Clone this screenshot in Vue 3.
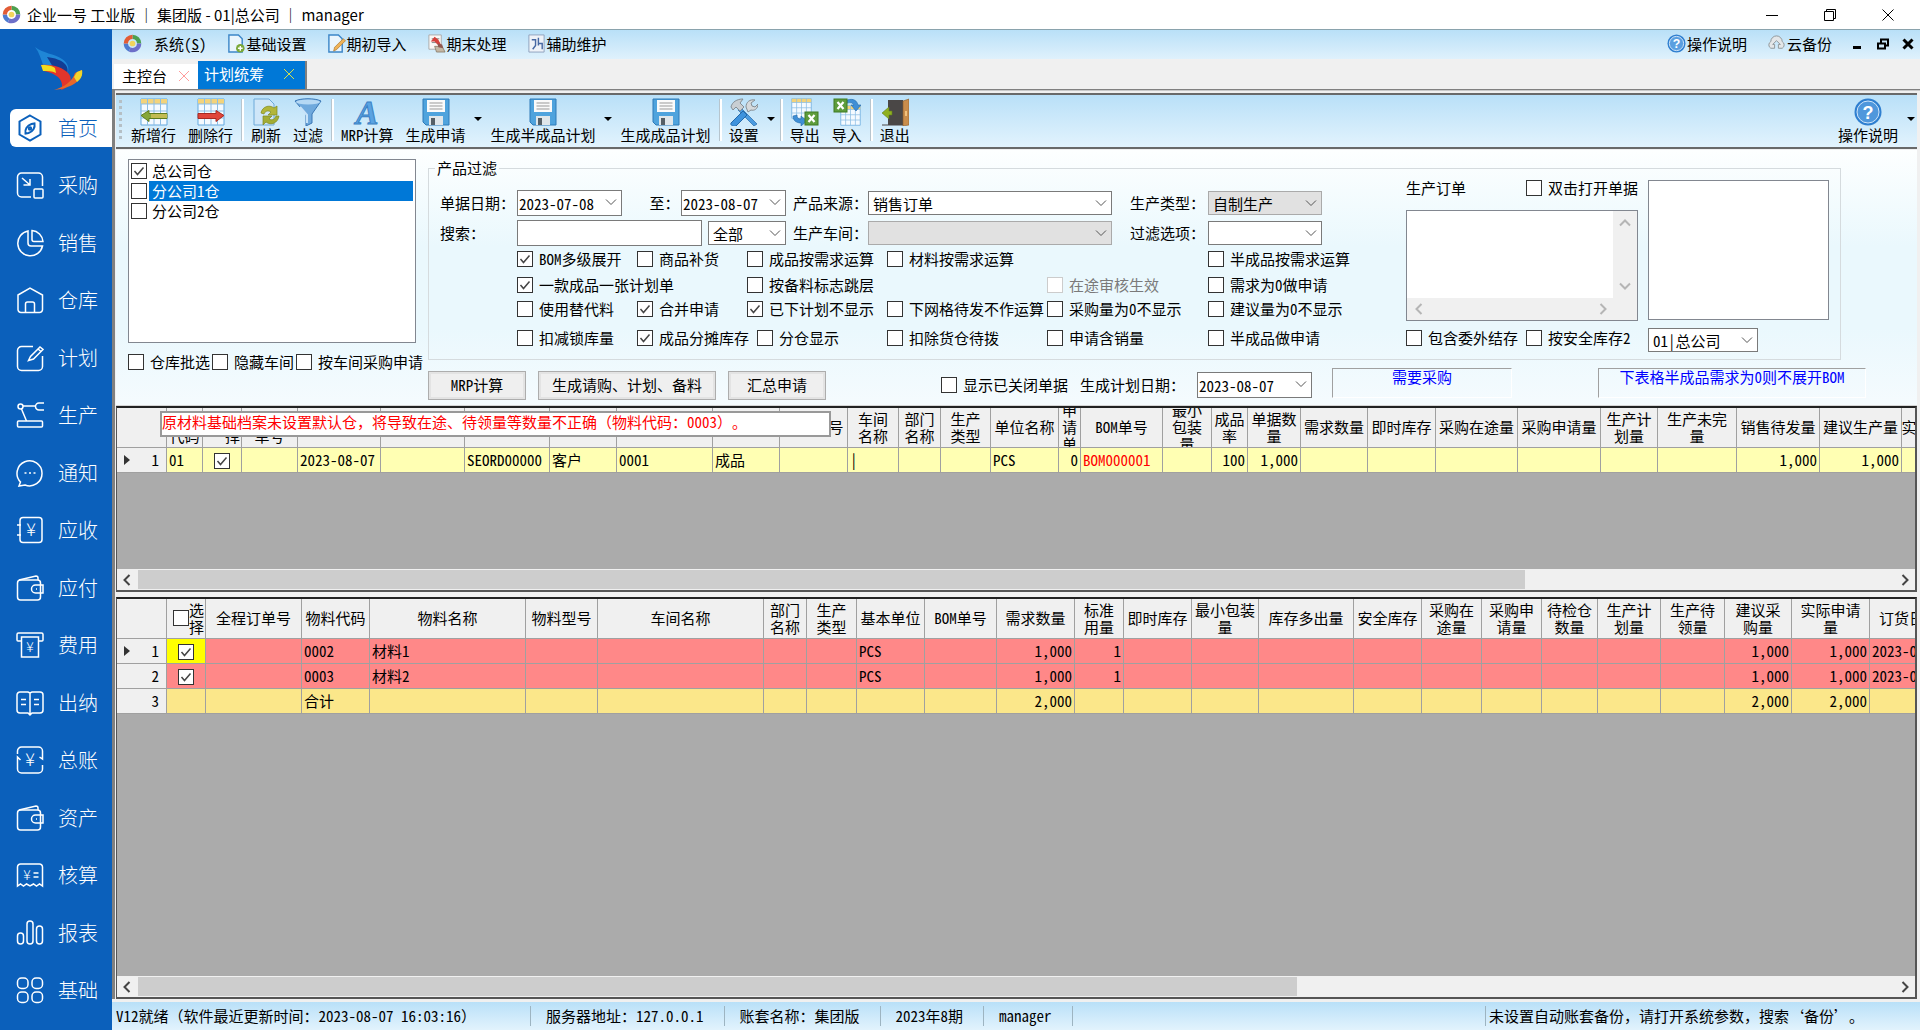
<script setup>
import { ref } from 'vue'

const sideItems = [
  { label: '首页', icon: '<path d="M14 1.500 24.500 7.500v13L14 26.500 3.500 20.500v-13z"/><path d="M18.500 9.500c.8 4-1.500 8-6 9.500l-3 .5c-.8-4 1.500-8 6-9.500z"/><circle cx="14" cy="14.500" r="1.200"/>' },
  { label: '采购', icon: '<path d="M15 26H5.500A4 4 0 0 1 1.500 22V6a4 4 0 0 1 4-4h17a4 4 0 0 1 4 4v9"/><path d="M6 7l8 7M14 8v6H7.500"/><rect x="18" y="18" width="9" height="9" rx="1"/>' },
  { label: '销售', icon: '<path d="M12 2A12.500 12.500 0 1 0 26.500 17H15a3 3 0 0 1-3-3z"/><path d="M16 1.500A12 12 0 0 1 27 12.500H18a2 2 0 0 1-2-2z"/>' },
  { label: '仓库', icon: '<path d="M2 9 14 2l12.500 7v14.500a3 3 0 0 1-3 3H5a3 3 0 0 1-3-3z"/><path d="M9.500 26v-8a2 2 0 0 1 2-2h5a2 2 0 0 1 2 2v8"/>' },
  { label: '计划', icon: '<path d="M17 2.500H5.500a4 4 0 0 0-4 4v16a4 4 0 0 0 4 4h17a4 4 0 0 0 4-4V12"/><path d="M12.500 16.500l2-4L24 3l3 2.500-9.500 9.500z"/><path d="M22 5l3 2.500"/>' },
  { label: '生产', icon: '<circle cx="4.500" cy="5.500" r="2.500"/><path d="M7 5h12M5.500 8l5 12M28 2h-5a3.500 3.500 0 0 0 0 7h5"/><rect x="1.500" y="20" width="25" height="6" rx="1"/>' },
  { label: '通知', icon: '<path d="M4.500 23A12.500 12.500 0 1 1 9 26l-6 1z"/><path d="M8.500 14h2M13 14h2M17.500 14h2"/>' },
  { label: '应收', icon: '<rect x="4" y="1.500" width="22" height="25" rx="3"/><path d="M1 9h4M1 19h4"/>', yen: [15, 20, 18] },
  { label: '应付', icon: '<rect x="1.500" y="6" width="23" height="20" rx="3"/><path d="M3 6l17-4a2 2 0 0 1 2 2v2M27 11h-7.500a4 4 0 0 0 0 8H27zM20 15h1"/>' },
  { label: '费用', icon: '<path d="M5 10H2a1 1 0 0 1-1-1V3.500A1.500 1.500 0 0 1 2.500 2h23A1.500 1.500 0 0 1 27 3.500V9a1 1 0 0 1-1 1h-3"/><path d="M5.500 6h17v20h-17z"/>', yen: [14, 21, 14] },
  { label: '出纳', icon: '<path d="M14 4v22M14 4l-2-1H4a3 3 0 0 0-3 3v15a3 3 0 0 0 3 3h8l2 2 2-2h8a3 3 0 0 0 3-3V6a3 3 0 0 0-3-3h-8z"/><path d="M5 10.500h5M5 15.500h5M18 10.500h5M18 15.500h5"/>' },
  { label: '总账', icon: '<path d="M1.500 8V5a4 4 0 0 1 4-4h17a4 4 0 0 1 4 4v8l-3-2M26.500 19v4a4 4 0 0 1-4 4h-17a4 4 0 0 1-4-4V11l3 3"/>', yen: [14, 20, 18] },
  { label: '资产', icon: '<rect x="1.500" y="6" width="23" height="20" rx="3"/><path d="M3 6l17-4a2 2 0 0 1 2 2v2M27 11h-7.500a4 4 0 0 0 0 8H27zM20 15h1"/>' },
  { label: '核算', icon: '<path d="M1.500 25V6a3 3 0 0 1 3-3h19a3 3 0 0 1 3 3v19l-3-2-3 2-3-2-3.500 2-3.500-2-3 2-3-2z"/><path d="M17.500 12h5M17.500 16h5"/>', yen: [11, 19, 14] },
  { label: '报表', icon: '<rect x="1.500" y="14" width="6" height="11" rx="3"/><rect x="11" y="2" width="6" height="23" rx="3"/><rect x="20.500" y="7" width="6" height="18" rx="3"/>' },
  { label: '基础', icon: '<rect x="1.500" y="2" width="10.500" height="10.500" rx="4"/><rect x="16" y="2" width="10.500" height="10.500" rx="4"/><rect x="1.500" y="16" width="10.500" height="10.500" rx="4"/><rect x="16" y="16" width="10.500" height="10.500" rx="4"/>' }
]

const page = '<path d="M2 1h10l4 4v14H2z" fill="#eaf5fd" stroke="#3c86c8" stroke-width="1.500"/>'
const menus = [
  { label: '基础设置', icon: page + '<circle cx="14" cy="15" r="4.500" fill="#7aa83a"/><path d="M14 12.500v5M11.500 15h5" stroke="#fff" stroke-width="1.500"/>' },
  { label: '期初导入', icon: page + '<path d="M7 18l1-4 9-9 2.500 2-9.500 9.500z" fill="#f0b358" stroke="#a9762d" stroke-width=".7"/>' },
  { label: '期末处理', icon: '<path d="M2 1h13v15H2z" fill="#fbf7f5" stroke="#aaa"/><path d="M5 5h8M5 9h8" stroke="#888"/><path d="M4 8l4-5 4 3 3 6-4-1-3-3z" fill="#d5413c"/><path d="M8 13h8l3 6h-9z" fill="#c4b7a5" stroke="#7a6a55" stroke-width=".7"/><path d="M11 10l5 1 1 4-5-1z" fill="#8e5650"/>' },
  { label: '辅助维护', icon: '<path d="M2 1h16v18H2z" fill="#eef2f8" stroke="#8fa1bd"/><path d="M5 6h4v6l-3 4M12 4v8M12 10h4v6" fill="none" stroke="#4668a3" stroke-width="1.500"/>' }
]

const sheet = '<path d="M1 1h26v26H1z" fill="#f4faff" stroke="#65a9df"/><path d="M1 1h26v5H1z" fill="#f3d37b"/><path d="M1 6h26M1 13h26M1 20h26M7.500 1v26M14 1v26M20.500 1v26" stroke="#8cbde4" fill="none"/>'
const floppy = '<path d="M1 1h26v26H4l-3-3z" fill="#4fa3dd" stroke="#2f7ab8"/><path d="M5 2h18v12H5z" fill="#fafafa"/><path d="M7.500 5h13M7.500 8h13M7.500 11h13" stroke="#999"/><path d="M7 18h14v9H7z" fill="#dfe6ea"/><path d="M9 20h4v7H9z" fill="#555f66"/>'
const excel = (x, y) => `<rect x="${x}" y="${y}" width="13" height="13" fill="#5e9c3c" stroke="#3e7a22"/><path d="M${x + 3.5} ${y + 3}l6 7M${x + 9.5} ${y + 3}l-6 7" stroke="#fff" stroke-width="2.200"/>`
const tools = [
  { label: '新增行', icon: sheet + '<path d="M1 17.500l8-5v3h18v5H9v3z" fill="#86a63a" stroke="#5f7d1f"/><path d="M11 16h16v4H11z" fill="#c2bb52"/>' },
  { label: '删除行', icon: sheet + '<path d="M27 17.500l-8-5v3H1v5h18v3z" fill="#e0453b" stroke="#a92a22"/>', sep: true },
  { label: '刷新', icon: '<path d="M2 1h15l5 5v21H2z" fill="#cfe6f8" stroke="#6ca9d8"/><path d="M9 15c1-6 8-9 13-5l3-2v9h-9l3-3c-3-2-6-1-7 2z" fill="#b2b63a" stroke="#7f8a1e" stroke-width=".7"/><path d="M27 18c-1 7-8 10-13 6l-3 3v-9h9l-3 3c3 2 6 0 7-3z" fill="#a2ad35" stroke="#7f8a1e" stroke-width=".7"/>' },
  { label: '过滤', icon: '<path d="M1 3c6-3 20-3 26 0l-9 13v9l-6 3V16z" fill="#6fa9dd" stroke="#3a77b5"/><ellipse cx="14" cy="4" rx="12" ry="2.500" fill="#b5d8f4"/><path d="M6 9l7 8v8" stroke="#c9e3f8" fill="none" stroke-width="2"/>', sep: true },
  { label: 'MRP计算', icon: '', letter: 'A' },
  { label: '生成申请', icon: floppy, arrow: true },
  { label: '生成半成品计划', icon: floppy, arrow: true },
  { label: '生成成品计划', icon: floppy, sep: true },
  { label: '设置', icon: '<path d="M10 9l17 17-3 2L8 12z" fill="#4c9be0" stroke="#2369aa" stroke-width=".7"/><path d="M1 9c1-5 6-8 12-8l-3 4 4 4-4 4-4-4-3 3z" fill="#c9ced2" stroke="#868e94"/><path d="M16 9c0-5 4-8 9-7l-4 3 1 3 3 1 3-3c0 5-4 7-7 6l-3 2z" fill="#d5d9dc" stroke="#868e94"/><path d="M1 25l12-12 4 4L6 28c-3 1-6-1-5-3z" fill="#3f93dd" stroke="#2369aa"/>', arrow: true, sep: true },
  { label: '导出', icon: '<g transform="scale(.75)">' + sheet + '</g><path d="M2 18c0 5 4 7 8 7v3l6-5-6-5v3c-3 0-4-1-4-4z" fill="#3f8fd6" stroke="#2369aa" stroke-width=".6"/>' + excel(14, 14) },
  { label: '导入', icon: '<g transform="translate(7 7) scale(.75)">' + sheet + '</g><path d="M14 2c7-2 10 1 11 5h3l-5 6-5-6h3c-1-2-3-3-7-2z" fill="#3f8fd6" stroke="#2369aa" stroke-width=".6"/>' + excel(1, 1), sep: true },
  { label: '退出', icon: '<path d="M7 2h15v25H7z" fill="#4a4746"/><path d="M1 27h21" stroke="#4a4746"/><path d="M28 1v26l-6 1V3z" fill="#c98d4c" stroke="#8a5a28" stroke-width=".6"/><path d="M1 15l7-6v4h3v4H8v4z" fill="#8fb01f" stroke="#5f7d1f" stroke-width=".6"/><path d="M24 13h2v5h-2z" fill="#f2c27d"/>' }
]

const warehouses = ref([
  { name: '总公司仓', on: true },
  { name: '分公司1仓', on: false, active: true },
  { name: '分公司2仓', on: false }
])
const stockOpts = ['仓库批选', '隐藏车间', '按车间采购申请']

const checks = ref([
  [1, 1, [['BOM多级展开', true]]], [1, 2, [['商品补货', false]]], [1, 3, [['成品按需求运算', false]]], [1, 4, [['材料按需求运算', false]]], [1, 6, [['半成品按需求运算', false]]],
  [2, 1, [['一款成品一张计划单', true]]], [2, 3, [['按备料标志跳层', false]]], [2, 5, [['在途审核生效', false, true]]], [2, 6, [['需求为0做申请', false]]],
  [3, 1, [['使用替代料', false]]], [3, 2, [['合并申请', true]]], [3, 3, [['已下计划不显示', true]]], [3, 4, [['下网格待发不作运算', false]]], [3, 5, [['采购量为0不显示', false]]], [3, 6, [['建议量为0不显示', false]]],
  [4, 1, [['扣减锁库量', false]]], [4, 2, [['成品分摊库存', true], ['分仓显示', false]]], [4, 4, [['扣除货仓待拨', false]]], [4, 5, [['申请含销量', false]]], [4, 6, [['半成品做申请', false]]]
])

// title, width, cell text, alignment
const orderCols = [
  ['仓库\n代码', 36, '01'], ['选\n择', 39, '', 'check'], ['全程\n单号', 56, ''], ['', 83, '2023-08-07'], ['', 84, ''], ['', 85, 'SEORD00000'],
  ['', 67, '客户'], ['', 96, '0001'], ['', 67, '成品'], ['物料型号', 68, ''], ['车间\n名称', 51, '|'], ['部门\n名称', 42, ''], ['生产\n类型', 50, ''],
  ['单位名称', 68, 'PCS'], ['申\n请\n单', 22, '0', 'num'], ['BOM单号', 82, 'BOM000001', 'red'], ['最小\n包装\n量', 49, ''], ['成品\n率', 36, '100', 'num'],
  ['单据数\n量', 53, '1,000', 'num'], ['需求数量', 67, ''], ['即时库存', 68, ''], ['采购在途量', 82, ''], ['采购申请量', 83, ''], ['生产计\n划量', 57, ''],
  ['生产未完\n量', 79, ''], ['销售待发量', 83, '1,000', 'num'], ['建议生产量', 82, '1,000', 'num'], ['实', 14, '']
]
const partCols = [
  ['选\n择', 39, 'check'], ['全程订单号', 96], ['物料代码', 68], ['物料名称', 156], ['物料型号', 72], ['车间名称', 166], ['部门\n名称', 43], ['生产\n类型', 50],
  ['基本单位', 68], ['BOM单号', 72], ['需求数量', 78, 'num'], ['标准\n用量', 49, 'num'], ['即时库存', 68], ['最小包装\n量', 67], ['库存多出量', 95],
  ['安全库存', 68], ['采购在\n途量', 60], ['采购申\n请量', 60], ['待检仓\n数量', 56], ['生产计\n划量', 63], ['生产待\n领量', 64], ['建议采\n购量', 67, 'num'],
  ['实际申请\n量', 78, 'num'], ['订货日', 46, 'cut']
]
const partRows = [
  { 2: '0002', 3: '材料1', 8: 'PCS', 10: '1,000', 11: '1', 21: '1,000', 22: '1,000', 23: '2023-0' },
  { 2: '0003', 3: '材料2', 8: 'PCS', 10: '1,000', 11: '1', 21: '1,000', 22: '1,000', 23: '2023-0' },
  { 2: '合计', 10: '2,000', 21: '2,000', 22: '2,000' }
]
</script>

<template>
  <div class="app">
    <header class="titlebar">
      <svg class="brand" viewBox="0 0 20 20">
        <g fill="none" stroke-width="4.500">
          <path d="M10 3a7 7 0 0 1 7 7" stroke="#4ba04f" /><path d="M17 10a7 7 0 0 1-10 6.300" stroke="#6d6fc9" />
          <path d="M7 16.300A7 7 0 0 1 3 10" stroke="#4d7bd0" /><path d="M3 10a7 7 0 0 1 7-7" stroke="#e25c35" />
        </g>
        <circle cx="10" cy="10" r="3" fill="#f1d45b" />
      </svg>
      <h1>企业一号 工业版 ｜ 集团版 - 01|总公司 ｜ manager</h1>
      <div class="winctl">
        <button aria-label="最小化"><svg viewBox="0 0 12 12"><path d="M0 6.500h12" /></svg></button>
        <button aria-label="还原"><svg viewBox="0 0 12 12"><path d="M.5 2.500h9v9h-9zM2.500 2.500v-2h9v9h-2" /></svg></button>
        <button aria-label="关闭"><svg viewBox="0 0 12 12"><path d="M.5.5l11 11M11.500.5l-11 11" /></svg></button>
      </div>
    </header>

    <div class="body">
      <aside class="side">
        <svg class="logo" viewBox="0 0 48 44">
          <path d="M0 0c7 6 20 7 27 12 6 4 8 9 5 16-4-6-14-8-24-10C6 12 4 5 0 0z" fill="#1f86d6" />
          <path d="M12 10c8 1 14 3 18 7 3 3 3 7 2 11-4-5-9-7-14-8z" fill="#123d94" />
          <path d="M6 18c10-1 22 2 28 9 4 6 1 13-8 16 2-5 1-9-3-13-4-3-8-5-14-6z" fill="#e2352b" />
          <path d="M6 18c5 0 10 0 14 3l1 5c-4-2-8-2-13-2z" fill="#f3dc1c" />
          <path d="M47 23c1 9-8 18-28 20 10-3 18-8 21-17z" fill="#e8672a" />
          <path d="M47 23c1 5-1 9-5 12l-3-5 3-5z" fill="#f1d52a" />
        </svg>
        <nav>
          <a v-for="(s, i) in sideItems" :key="s.label" href="#" :class="{ on: i === 0 }">
            <span class="pill">
              <svg viewBox="0 0 28 28"><g v-html="s.icon" /><text v-if="s.yen" :x="s.yen[0]" :y="s.yen[1]" :font-size="s.yen[2]" text-anchor="middle">¥</text></svg>
              {{ s.label }}
            </span>
          </a>
        </nav>
      </aside>

      <main>
        <div class="menubar">
          <button class="sys">
            <svg viewBox="0 0 20 20">
              <g fill="none" stroke-width="4.500">
                <path d="M10 3a7 7 0 0 1 7 7" stroke="#4ba04f" /><path d="M17 10a7 7 0 0 1-10 6.300" stroke="#6d6fc9" />
                <path d="M7 16.300A7 7 0 0 1 3 10" stroke="#4d7bd0" /><path d="M3 10a7 7 0 0 1 7-7" stroke="#e25c35" />
              </g>
              <circle cx="10" cy="10" r="3" fill="#f1d45b" />
            </svg>
            <span>系统(<u>S</u>)</span>
          </button>
          <button v-for="m in menus" :key="m.label"><svg viewBox="0 0 20 20" v-html="m.icon" />{{ m.label }}</button>
          <span class="grow" />
          <button>
            <svg viewBox="0 0 20 20"><circle cx="10" cy="10" r="9.500" fill="#2f7fd0" /><circle cx="10" cy="10" r="7.500" fill="#5a9fe0" stroke="#d5e8fa" /><text x="10" y="14.500" class="q">?</text></svg>操作说明
          </button>
          <button>
            <svg viewBox="0 0 20 20"><path d="M4 15a4 4 0 0 1 0-7 6 6 0 0 1 12 0 4 4 0 0 1 0 7h-4v-4h2l-4-4-4 4h2v4z" fill="#e3e6e8" stroke="#8e9598" /></svg>云备份
          </button>
          <div class="mdi">
            <button aria-label="最小化"><svg viewBox="0 0 12 12"><path d="M1 9.500h8" stroke-width="3" /></svg></button>
            <button aria-label="还原"><svg viewBox="0 0 12 12"><path d="M1 5.500h7v5H1zM4 5V1.500h7v6H8" stroke-width="2" /></svg></button>
            <button aria-label="关闭"><svg viewBox="0 0 12 12"><path d="M1.500 1.500l9 9M10.500 1.500l-9 9" stroke-width="3" /></svg></button>
          </div>
        </div>

        <div class="tabs">
          <button class="tab">主控台<svg viewBox="0 0 12 12"><path d="M1 1l10 10M11 1L1 11" stroke="#ff9c9c" /></svg></button>
          <button class="tab active">计划统筹<svg viewBox="0 0 12 12"><path d="M1 1l10 10M11 1L1 11" stroke="#d6e04a" /></svg></button>
        </div>

        <div class="work">
          <div class="toolbar">
            <i class="grip" />
            <template v-for="t in tools" :key="t.label">
              <button class="tool">
                <svg v-if="t.letter" viewBox="0 0 28 28"><text x="14" y="26" class="big">{{ t.letter }}</text></svg>
                <svg v-else viewBox="0 0 28 28" v-html="t.icon" />
                {{ t.label }}
              </button>
              <button v-if="t.arrow" class="drop" aria-label="更多" />
              <i v-if="t.sep" class="sep" />
            </template>
            <span class="grow" />
            <button class="tool">
              <svg viewBox="0 0 28 28"><circle cx="14" cy="14" r="13.500" fill="#2f7fd0" /><circle cx="14" cy="14" r="11" fill="#4f97dc" stroke="#cfe5fa" /><text x="14" y="20.500" class="q lg">?</text></svg>
              操作说明
            </button>
            <button class="drop" aria-label="更多" />
          </div>

          <section class="filter">
            <div class="stock">
              <div class="list">
                <label v-for="w in warehouses" :key="w.name" :class="{ hit: w.active }"><input v-model="w.on" type="checkbox"><span>{{ w.name }}</span></label>
              </div>
              <div class="stockopts">
                <label v-for="o in stockOpts" :key="o" class="ck"><input type="checkbox">{{ o }}</label>
              </div>
            </div>

            <div class="right">
              <fieldset>
                <legend>产品过滤</legend>
                <div class="fs">
                  <div class="fields">
                    <div class="form">
                      <label for="d1">单据日期：</label>
                      <div class="cell dates">
                        <span class="combo date"><input id="d1" value="2023-07-08"><svg viewBox="0 0 12 12"><path d="M1 3.500l5 5 5-5" /></svg></span>
                        <label for="d2">至：</label>
                        <span class="combo date"><input id="d2" value="2023-08-07"><svg viewBox="0 0 12 12"><path d="M1 3.500l5 5 5-5" /></svg></span>
                      </div>
                      <label for="src">产品来源：</label>
                      <span class="combo wide"><select id="src"><option>销售订单</option></select><svg viewBox="0 0 12 12"><path d="M1 3.500l5 5 5-5" /></svg></span>
                      <label for="typ">生产类型：</label>
                      <span class="combo off"><select id="typ"><option>自制生产</option></select><svg viewBox="0 0 12 12"><path d="M1 3.500l5 5 5-5" /></svg></span>

                      <label for="kw">搜索：</label>
                      <div class="cell search">
                        <input id="kw" class="kw">
                        <span class="combo"><select aria-label="范围"><option>全部</option></select><svg viewBox="0 0 12 12"><path d="M1 3.500l5 5 5-5" /></svg></span>
                      </div>
                      <label for="shop">生产车间：</label>
                      <span class="combo wide off"><select id="shop"><option /></select><svg viewBox="0 0 12 12"><path d="M1 3.500l5 5 5-5" /></svg></span>
                      <label for="opt">过滤选项：</label>
                      <span class="combo"><select id="opt"><option /></select><svg viewBox="0 0 12 12"><path d="M1 3.500l5 5 5-5" /></svg></span>
                    </div>
                    <div class="checks">
                      <div v-for="c in checks" :key="c[0] + '-' + c[1]" class="cg" :style="{ gridRow: c[0], gridColumn: c[1] }">
                        <label v-for="k in c[2]" :key="k[0]" class="ck" :class="{ dim: k[2] }"><input v-model="k[1]" type="checkbox" :disabled="k[2]">{{ k[0] }}</label>
                      </div>
                    </div>
                  </div>
                  <div class="orders">
                    <div class="orow"><label for="po">生产订单</label><label class="ck"><input type="checkbox">双击打开单据</label></div>
                    <div class="memo">
                      <textarea id="po" />
                      <div class="vs"><svg viewBox="0 0 12 12"><path d="M1 8.500l5-5 5 5" /></svg><svg viewBox="0 0 12 12"><path d="M1 3.500l5 5 5-5" /></svg></div>
                      <div class="hs"><svg viewBox="0 0 12 12"><path d="M8.500 1l-5 5 5 5" /></svg><svg viewBox="0 0 12 12"><path d="M3.500 1l5 5-5 5" /></svg></div>
                    </div>
                    <div class="orow low"><label class="ck"><input type="checkbox">包含委外结存</label><label class="ck"><input type="checkbox">按安全库存2</label></div>
                  </div>
                  <div class="pick">
                    <div class="box" />
                    <span class="combo"><select aria-label="公司"><option>01|总公司</option></select><svg viewBox="0 0 12 12"><path d="M1 3.500l5 5 5-5" /></svg></span>
                  </div>
                </div>
              </fieldset>

              <div class="actions">
                <button class="btn">MRP计算</button>
                <button class="btn long">生成请购、计划、备料</button>
                <button class="btn">汇总申请</button>
                <label class="ck closed"><input type="checkbox">显示已关闭单据</label>
                <label for="pd">生成计划日期：</label>
                <span class="combo date plan"><input id="pd" value="2023-08-07"><svg viewBox="0 0 12 12"><path d="M1 3.500l5 5 5-5" /></svg></span>
                <div class="note">需要采购</div>
                <div class="note second">下表格半成品需求为0则不展开BOM</div>
              </div>
            </div>
          </section>

          <section class="grid top">
            <p class="tip">原材料基础档案未设置默认仓，将导致在途、待领量等数量不正确（物料代码：0003）。</p>
            <div class="scroll">
              <table>
                <colgroup><col class="idx"><col v-for="(c, i) in orderCols" :key="i" :style="{ width: c[1] + 'px' }"></colgroup>
                <thead>
                  <tr>
                    <th />
                    <th v-for="(c, i) in orderCols" :key="i"><div class="h" :class="{ end: c[3] === 'check' }">{{ c[0] }}</div></th>
                  </tr>
                </thead>
                <tbody>
                  <tr class="cream">
                    <th><i class="cur" />1</th>
                    <td v-for="(c, i) in orderCols" :key="i" :class="c[3]"><input v-if="c[3] === 'check'" type="checkbox" checked aria-label="选择"><template v-else>{{ c[2] }}</template></td>
                  </tr>
                </tbody>
              </table>
            </div>
            <div class="bar"><svg viewBox="0 0 12 12"><path d="M8.500 1l-5 5 5 5" /></svg><div class="track"><i style="width: 79%" /></div><svg viewBox="0 0 12 12"><path d="M3.500 1l5 5-5 5" /></svg></div>
          </section>

          <section class="grid bottom">
            <div class="scroll">
              <table>
                <colgroup><col class="idx"><col v-for="(c, i) in partCols" :key="i" :style="{ width: c[1] + 'px' }"></colgroup>
                <thead>
                  <tr>
                    <th />
                    <th v-for="(c, i) in partCols" :key="i"><div class="h" :class="{ end: c[2] === 'check', cut: c[2] === 'cut' }"><input v-if="c[2] === 'check'" type="checkbox" aria-label="全选">{{ c[0] }}</div></th>
                  </tr>
                </thead>
                <tbody>
                  <tr v-for="(r, n) in partRows" :key="n" :class="n < 2 ? 'rose' : 'sum'">
                    <th><i v-if="n === 0" class="cur" />{{ n + 1 }}</th>
                    <td v-for="(c, i) in partCols" :key="i" :class="[c[2], { lit: n === 0 && i === 0 }]"><input v-if="i === 0 && n < 2" type="checkbox" checked aria-label="选择"><template v-else>{{ r[i] }}</template></td>
                  </tr>
                </tbody>
              </table>
            </div>
            <div class="bar"><svg viewBox="0 0 12 12"><path d="M8.500 1l-5 5 5 5" /></svg><div class="track"><i style="width: 66%" /></div><svg viewBox="0 0 12 12"><path d="M3.500 1l5 5-5 5" /></svg></div>
          </section>
        </div>

        <footer>
          <span class="first">V12就绪（软件最近更新时间：2023-08-07 16:03:16）</span>
          <span>服务器地址：127.0.0.1</span>
          <span>账套名称：集团版</span>
          <span>2023年8期</span>
          <span>manager</span>
          <span class="last">未设置自动账套备份，请打开系统参数，搜索‘备份’。</span>
        </footer>
      </main>
    </div>
  </div>
</template>

<style>
body { margin: 0; background: #f0f0f0; }
</style>

<style scoped>
.app, .app button, .app input, .app select, .app textarea {
  font-family: "Noto Sans Mono CJK SC", "Noto Sans CJK SC", "Liberation Sans", sans-serif;
  font-size: 15px;
  color: #000;
  text-spacing-trim: space-all;
}
.app { min-height: 100vh; display: flex; flex-direction: column; line-height: 18px; white-space: nowrap; overflow: hidden; }
.app * { box-sizing: border-box; }
button { border: 0; background: none; padding: 0; white-space: nowrap; line-height: 18px; }
.grow { flex: 1; }

.titlebar { height: 29px; flex: none; background: #fff; display: flex; align-items: center; padding: 0 3px 0 2px; }
.titlebar h1 { margin: 0 0 0 6px; font: 400 15px/20px "Noto Sans CJK SC", sans-serif; flex: 1; }
.brand { width: 19px; height: 19px; }
.winctl { display: flex; }
.winctl button { width: 58px; height: 28px; display: flex; align-items: center; justify-content: center; }
.winctl svg { width: 12px; height: 12px; fill: none; stroke: #000; }

.body { flex: 1; display: flex; min-height: 0; }
.side { width: 112px; flex: none; background: #0b60bb; display: flex; flex-direction: column; padding-bottom: 11px; }
.logo { width: 48px; height: 44px; margin: 18px 0 8px 35px; flex: none; }
nav { flex: 1; display: flex; flex-direction: column; }
nav a { flex: 1; display: flex; align-items: center; text-decoration: none; color: #fff; padding-left: 10px; }
.pill { flex: 1; height: 38px; display: flex; align-items: center; gap: 14px; padding-left: 6px; border-radius: 6px 0 0 6px; font: 300 20px/28px "Noto Sans CJK SC", sans-serif; }
.pill svg { width: 28px; height: 28px; fill: none; stroke: #fff; stroke-width: 1.5; }
.pill text { stroke: none; fill: #fff; }
.on .pill { background: #fff; color: #0b60bb; }
.on svg { stroke: #0b60bb; stroke-width: 2; }

main { flex: 1; min-width: 0; display: flex; flex-direction: column; }
.menubar { height: 30px; flex: none; display: flex; align-items: center; gap: 20px; padding: 0 6px 2px 11px; border-top: 1px solid #8aa3ad; background: linear-gradient(#b9e0f8, #dff1fc); }
.menubar button { display: flex; align-items: center; gap: 1px; }
.menubar svg { width: 19px; height: 19px; }
.menubar .sys { gap: 12px; }
.mdi { display: flex; gap: 13px; }
.mdi svg { width: 12px; height: 12px; fill: none; stroke: #000; }
.q { fill: #fff; font: 700 13px "Liberation Sans", sans-serif; text-anchor: middle; }
.q.lg { font-size: 18px; }

.tabs { height: 30px; flex: none; display: flex; align-items: flex-end; background: #f0f0f0; padding-left: 2px; }
.tab { height: 25px; background: #fff; display: flex; align-items: center; gap: 11px; padding: 0 8px 2px; }
.tab.active { height: 28px; background: #0078d7; color: #fff; gap: 19px; padding: 0 10px 2px 6px; border-right: 2px solid #808080; }
.tab svg { width: 12px; height: 12px; fill: none; }

.work { flex: 1; display: flex; flex-direction: column; border: solid #808080; border-width: 1px 0 0 3px; box-shadow: inset 0 1px #c8c8c8; padding: 3px 3px 0 1px; background: #f0f0f0; min-height: 0; }
.toolbar { height: 56px; flex: none; display: flex; align-items: stretch; border: solid #696969; border-width: 2px 0; background: linear-gradient(#b9e0f8, #e2f3fd); }
.grip { width: 3px; margin: 5px 3px 8px 3px; border-left: 3px dotted #b5bfc5; }
.tool { padding: 3px 6px 0; display: flex; flex-direction: column; align-items: center; }
.tool svg { width: 28px; height: 28px; }
.big { font: italic 700 34px "Liberation Serif", serif; fill: #5aa3e2; stroke: #3a80c4; text-anchor: middle; }
.drop { width: 13px; display: flex; align-items: center; justify-content: center; }
.drop::before { content: ""; border: 4px solid transparent; border-top-color: #000; border-bottom: 0; margin-bottom: 4px; }
.sep { width: 6px; margin: 4px 0 6px; background: linear-gradient(90deg, transparent 2px, #b7c5ce 2px, #b7c5ce 3px, #fff 3px, #fff 5px, transparent 5px); }

input[type="checkbox"] { appearance: none; width: 16px; height: 16px; margin: 0; flex: none; background: #fff; border: 1px solid #333; display: inline-block; }
input[type="checkbox"]:checked { background: #fff url("data:image/svg+xml,%3Csvg xmlns='http://www.w3.org/2000/svg' viewBox='0 0 14 14'%3E%3Cpath d='M2.500 7l3 3.500 6-7' fill='none' stroke='%23444' stroke-width='1.500'/%3E%3C/svg%3E") center / 14px 14px; }
.ck { display: inline-flex; align-items: center; gap: 6px; }
.dim { color: #7a7a7a; }
.dim input[type="checkbox"] { border-color: #ccc; }

.filter { flex: none; display: flex; margin-top: 1px; height: 256px; padding: 9px 0 0 12px; background: linear-gradient(#fdffff, #eaf8fd 38%, #eaf8fd 70%, #f5fbfe); border-bottom: 1px solid #d5d5d5; }
.stock { width: 300px; flex: none; }
.list { width: 288px; height: 184px; border: 1px solid #828790; background: #fff; padding: 1px 2px; }
.list label { height: 20px; display: flex; align-items: center; }
.list input { margin-right: 2px; }
.list span { flex: 1; height: 20px; line-height: 20px; padding-left: 3px; }
.hit span { background: #0078d7; color: #fff; }
.stockopts { display: flex; gap: 2px; padding-top: 10px; }

.right { flex: 1; min-width: 0; padding-right: 76px; }
fieldset { margin: 0; padding: 0 0 3px; border: 1px solid #d5dbde; min-width: 0; }
legend { margin-left: 6px; padding: 0 2px; }
.fs { display: flex; padding-left: 11px; }
.fields { width: 966px; flex: none; padding-top: 13px; }
.form { display: grid; grid-template-columns: 77px 276px 75px 262px 78px 114px; grid-auto-rows: 26px; row-gap: 4px; align-items: center; }
.cell { display: flex; align-items: center; width: 269px; }
.dates { justify-content: space-between; }
.dates label { margin-left: 26px; }
.search { gap: 6px; }
.kw { width: 185px; height: 26px; border: 1px solid #7a7a7a; }
.combo { position: relative; display: block; height: 24px; }
.combo select, .combo input { appearance: none; width: 100%; height: 100%; border: 1px solid #7a7a7a; border-radius: 0; background: #fff; padding: 0 4px; display: block; }
.combo svg { position: absolute; right: 5px; top: 6px; width: 12px; height: 12px; fill: none; stroke: #555; }
.combo.off select { background: #e1e1e1; border-color: #aaa; }
.combo.wide { width: 244px; }
.combo.date { width: 105px; height: 26px; }
.combo.date input { padding: 0 1px; }
.search .combo { flex: 1; }
.checks { display: grid; margin-left: 77px; grid-template-columns: 120px 110px 140px 160px 161px 160px; grid-template-rows: 26px 26px 22px 36px; align-items: center; }
.cg { display: flex; gap: 8px; width: 0; }

.orders { width: 232px; flex: none; }
.orow { display: flex; justify-content: space-between; padding-top: 2px; align-items: center; }
.orow.low { padding-top: 8px; justify-content: flex-start; gap: 8px; }
.memo { margin-top: 13px; height: 111px; border: 1px solid #828790; background: #fff; display: grid; grid-template: 1fr 22px / 1fr 24px; }
.memo textarea { border: 0; resize: none; padding: 0; min-width: 0; min-height: 0; width: 100%; height: 100%; display: block; }
.memo svg { width: 12px; height: 12px; fill: none; stroke: #b5b5b5; stroke-width: 2; }
.vs { background: #f0f0f0; display: flex; flex-direction: column; align-items: center; justify-content: space-between; padding: 6px 0; }
.hs { grid-column: 1 / 3; background: #f0f0f0; display: flex; align-items: center; justify-content: space-between; padding: 0 28px 0 6px; }
.pick { margin-left: 10px; padding-top: 3px; width: 181px; }
.box { height: 140px; border: 1px solid #828790; background: #fff; }
.pick .combo { width: 110px; margin-top: 8px; }

.actions { display: flex; gap: 12px; align-items: center; padding-top: 8px; height: 42px; }
.actions > * { flex: none; }
.btn { width: 98px; height: 29px; background: #efefef; border: 1px solid #adadad; box-shadow: inset 0 0 0 2px #e3e3e3; }
.btn.long { width: 178px; }
.closed { margin-left: 103px; }
.combo.plan { width: 115px; }
.note { width: 180px; height: 30px; margin-left: 8px; align-self: flex-start; border: 1px solid; border-color: #a0a0a0 #fff #fff #a0a0a0; color: #00f; text-align: center; line-height: 16px; }
.note.second { width: 268px; margin-left: 74px; }

.grid { border: 2px solid #555; border-left-width: 1px; border-top-color: #222; background: #ababab; position: relative; display: flex; flex-direction: column; min-height: 0; }
.top { height: 186px; flex: none; }
.bottom { flex: 1; margin-top: 5px; }
.scroll { flex: 1; overflow: hidden; min-height: 0; }
table { width: 100%; table-layout: fixed; border-collapse: separate; border-spacing: 0; }
.idx { width: 50px; }
th, td { padding: 0; font-weight: 400; border-right: 1px solid #a0a0a0; border-bottom: 1px solid #a0a0a0; overflow: hidden; }
th:last-child, td:last-child { border-right: 0; }
th { background: #f0f0f0; }
.h { height: 39px; display: flex; align-items: center; justify-content: center; white-space: pre; line-height: 17px; overflow: hidden; padding-bottom: 2px; }
.h.end { justify-content: flex-end; padding-right: 1px; }
.h.cut { justify-content: flex-start; padding-left: 9px; }
td, tbody th { height: 25px; line-height: 18px; }
td { padding: 0 2px; text-align: left; }
tbody th { text-align: right; padding-right: 7px; }
.num { text-align: right; }
.red { color: #f00; }
.check { text-align: center; }
.check input { vertical-align: middle; }
.cream td { background: #ffffb3; }
.rose td { background: #f88; }
.rose td.lit { background: #ff0; }
.sum td { background: #fbe78a; }
.cur { float: left; margin: 4px 0 0 7px; border: 5px solid transparent; border-left: 6px solid #333; border-right: 0; }
.tip { position: absolute; z-index: 1; left: 43px; top: 3px; width: 671px; height: 26px; margin: 0; background: #fff; border: 2px solid #999; color: #f00; line-height: 18px; }
.bar { height: 21px; flex: none; background: #f0f0f0; display: flex; align-items: center; gap: 5px; padding: 0 4px; }
.bar svg { width: 12px; height: 12px; fill: none; stroke: #444; stroke-width: 2; }
.track { flex: 1; height: 19px; }
.track i { display: block; height: 100%; background: #cdcdcd; }

footer { height: 28px; flex: none; display: flex; align-items: center; margin-top: 3px; background: linear-gradient(#b9e0f8, #e2f3fd); }
footer span { padding: 0 20px 0 15px; border-left: 1px solid #9db4c1; line-height: 20px; }
footer .first { width: 418px; padding: 0 0 0 4px; border: 0; }
footer span:nth-child(5) { border-right: 1px solid #9db4c1; }
footer .last { margin-left: auto; width: 435px; padding: 0 0 0 3px; }
</style>
